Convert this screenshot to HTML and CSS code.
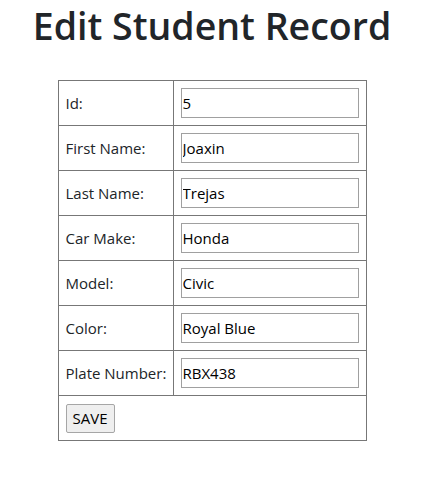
FILE: index.html
```html
<!DOCTYPE html>
<html>
<head>
<meta charset="utf-8">
<link rel="stylesheet" href="styles.css">
</head>
<body>
<div class="page">
  <h1 class="title">Edit Student Record</h1>
  <form class="form">
    <table class="record">
      <tr><td class="label">Id:</td><td class="field"><input class="input" type="text" value="5"></td></tr>
      <tr><td class="label">First Name:</td><td class="field"><input class="input" type="text" value="Joaxin"></td></tr>
      <tr><td class="label">Last Name:</td><td class="field"><input class="input" type="text" value="Trejas"></td></tr>
      <tr><td class="label">Car Make:</td><td class="field"><input class="input" type="text" value="Honda"></td></tr>
      <tr><td class="label">Model:</td><td class="field"><input class="input" type="text" value="Civic"></td></tr>
      <tr><td class="label">Color:</td><td class="field"><input class="input" type="text" value="Royal Blue"></td></tr>
      <tr><td class="label">Plate Number:</td><td class="field"><input class="input" type="text" value="RBX438"></td></tr>
      <tr><td class="action" colspan="2"><button class="save" type="button">SAVE</button></td></tr>
    </table>
  </form>
</div>
</body>
</html>
```

FILE: styles.css
```css
html, body {
  margin: 0;
  padding: 0;
  background: #fff;
}
body {
  font-family: "Open Sans", "Noto Sans", sans-serif;
  color: #212529;
}
.page {
  width: 424px;
  display: flex;
  flex-direction: column;
  align-items: center;
}
.title {
  margin: 0;
  font-size: 37.5px;
  font-weight: 600;
  line-height: 52px;
  color: #212529;
}
.form {
  margin-top: 28px;
}
.record {
  border-collapse: collapse;
  border: 1px solid #333;
}
.record td {
  border: 1px solid #777;
  height: 45px;
  padding: 0 7px;
  box-sizing: border-box;
  font-size: 15px;
  white-space: nowrap;
}
.record td.label {
  width: 115px;
  padding: 0 4px 0 7px;
}
.field {
  width: 193px;
}
.input {
  display: block;
  width: 178px;
  height: 30px;
  box-sizing: border-box;
  border: 1px solid #a0a0a0;
  padding: 0 1px;
  font-family: inherit;
  font-size: 15px;
  color: #000;
  background: #fff;
}
.save {
  display: block;
  height: 29px;
  padding: 0 6px;
  font-family: inherit;
  font-size: 15px;
  color: #000;
  background: #efefef;
  border: 1px solid #a6a6a6;
  border-radius: 2px;
}
```
